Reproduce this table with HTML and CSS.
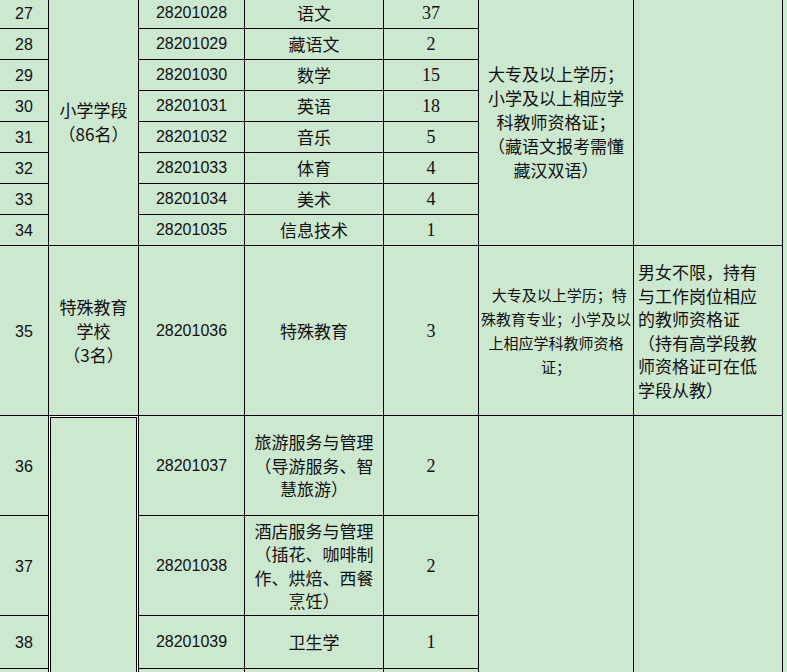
FILE: index.html
```html
<!DOCTYPE html>
<html lang="zh-CN">
<head>
<meta charset="utf-8">
<title>岗位表</title>
<link rel="stylesheet" href="styles.css">
</head>
<body>
<div class="frame">
<table class="grid">
  <colgroup>
    <col class="c-idx">
    <col class="c-stage">
    <col class="c-code">
    <col class="c-subj">
    <col class="c-num">
    <col class="c-req">
    <col class="c-note">
  </colgroup>
  <tbody>
    <tr class="r-std">
      <td class="idx">27</td>
      <td class="stage" rowspan="8">小学学段<br>（86名）</td>
      <td class="code">28201028</td>
      <td class="subj">语文</td>
      <td class="num">37</td>
      <td class="req" rowspan="8">大专及以上学历；<br>小学及以上相应学<br>科教师资格证；<br>（藏语文报考需懂<br>藏汉双语）</td>
      <td class="note" rowspan="8"></td>
    </tr>
    <tr class="r-std">
      <td class="idx">28</td>
      <td class="code">28201029</td>
      <td class="subj">藏语文</td>
      <td class="num">2</td>
    </tr>
    <tr class="r-std">
      <td class="idx">29</td>
      <td class="code">28201030</td>
      <td class="subj">数学</td>
      <td class="num">15</td>
    </tr>
    <tr class="r-std">
      <td class="idx">30</td>
      <td class="code">28201031</td>
      <td class="subj">英语</td>
      <td class="num">18</td>
    </tr>
    <tr class="r-std">
      <td class="idx">31</td>
      <td class="code">28201032</td>
      <td class="subj">音乐</td>
      <td class="num">5</td>
    </tr>
    <tr class="r-std">
      <td class="idx">32</td>
      <td class="code">28201033</td>
      <td class="subj">体育</td>
      <td class="num">4</td>
    </tr>
    <tr class="r-std">
      <td class="idx">33</td>
      <td class="code">28201034</td>
      <td class="subj">美术</td>
      <td class="num">4</td>
    </tr>
    <tr class="r-std">
      <td class="idx">34</td>
      <td class="code">28201035</td>
      <td class="subj">信息技术</td>
      <td class="num">1</td>
    </tr>
    <tr class="r-35">
      <td class="idx">35</td>
      <td class="stage stage-tall">特殊教育<br>学校<br>（3名）</td>
      <td class="code">28201036</td>
      <td class="subj">特殊教育</td>
      <td class="num">3</td>
      <td class="req req-small">&nbsp;&nbsp;大专及以上学历；特<br>殊教育专业；小学及以<br>上相应学科教师资格<br>证；</td>
      <td class="note">男女不限，持有<br>与工作岗位相应<br>的教师资格证<br>（持有高学段教<br>师资格证可在低<br>学段从教）</td>
    </tr>
    <tr class="r-100">
      <td class="idx">36</td>
      <td class="stage sel" rowspan="4"></td>
      <td class="code">28201037</td>
      <td class="subj multi">旅游服务与管理<br>（导游服务、智<br>慧旅游）</td>
      <td class="num">2</td>
      <td class="req" rowspan="4"></td>
      <td class="note" rowspan="4"></td>
    </tr>
    <tr class="r-100">
      <td class="idx">37</td>
      <td class="code">28201038</td>
      <td class="subj multi">酒店服务与管理<br>（插花、咖啡制<br>作、烘焙、西餐<br>烹饪）</td>
      <td class="num">2</td>
    </tr>
    <tr class="r-38">
      <td class="idx">38</td>
      <td class="code">28201039</td>
      <td class="subj">卫生学</td>
      <td class="num">1</td>
    </tr>
    <tr class="r-39">
      <td class="idx"></td>
      <td class="code"></td>
      <td class="subj"></td>
      <td class="num"></td>
    </tr>
  </tbody>
</table>
</div>
</body>
</html>
```

FILE: styles.css
```css
html, body {
  margin: 0;
  padding: 0;
  background: #cce8cf;
  overflow: hidden;
}

body {
  width: 787px;
  height: 672px;
  color: #111;
  font-family: "Noto Sans CJK SC", "Liberation Sans", sans-serif;
  font-size: 17px;
}

.frame {
  width: 787px;
  height: 672px;
  overflow: hidden;
}

.grid {
  border-collapse: collapse;
  table-layout: fixed;
  width: 784px;
  margin: -3px 0 0 -1px;
  background: #cce8cf;
}

.c-idx { width: 49px; }
.c-stage { width: 90px; }
.c-code { width: 106px; }
.c-subj { width: 139px; }
.c-num { width: 95px; }
.c-req { width: 155px; }
.c-note { width: 149px; }

.grid td {
  border: 1px solid #000;
  padding: 0 2px;
  text-align: center;
  vertical-align: middle;
  line-height: 24px;
  overflow: hidden;
  white-space: nowrap;
}

.r-std { height: 31px; }
.r-35 { height: 170px; }
.r-100 { height: 100px; }
.r-38 { height: 53px; }
.r-39 { height: 30px; }

.idx {
  font-family: "Liberation Sans", "Noto Sans CJK SC", sans-serif;
  font-size: 16px;
  padding-top: 2px !important;
}

.code {
  font-family: "Liberation Sans", "Noto Sans CJK SC", sans-serif;
  font-size: 16px;
}

.num {
  font-family: "Liberation Serif", "Noto Sans CJK SC", serif;
  font-size: 18px;
}

.stage {
  line-height: 22px;
}

.stage-tall {
  line-height: 24.5px;
}

.subj.multi {
  line-height: 23.5px;
}

.req {
  line-height: 24px;
  padding: 0 1px;
}

.req-small {
  font-size: 15px;
  line-height: 18px;
}

.note {
  text-align: left !important;
  padding-left: 4px !important;
  line-height: 23.5px !important;
}

.sel {
  box-shadow: inset 0 0 0 1px #fff, inset 0 0 0 2px #000;
}
```
